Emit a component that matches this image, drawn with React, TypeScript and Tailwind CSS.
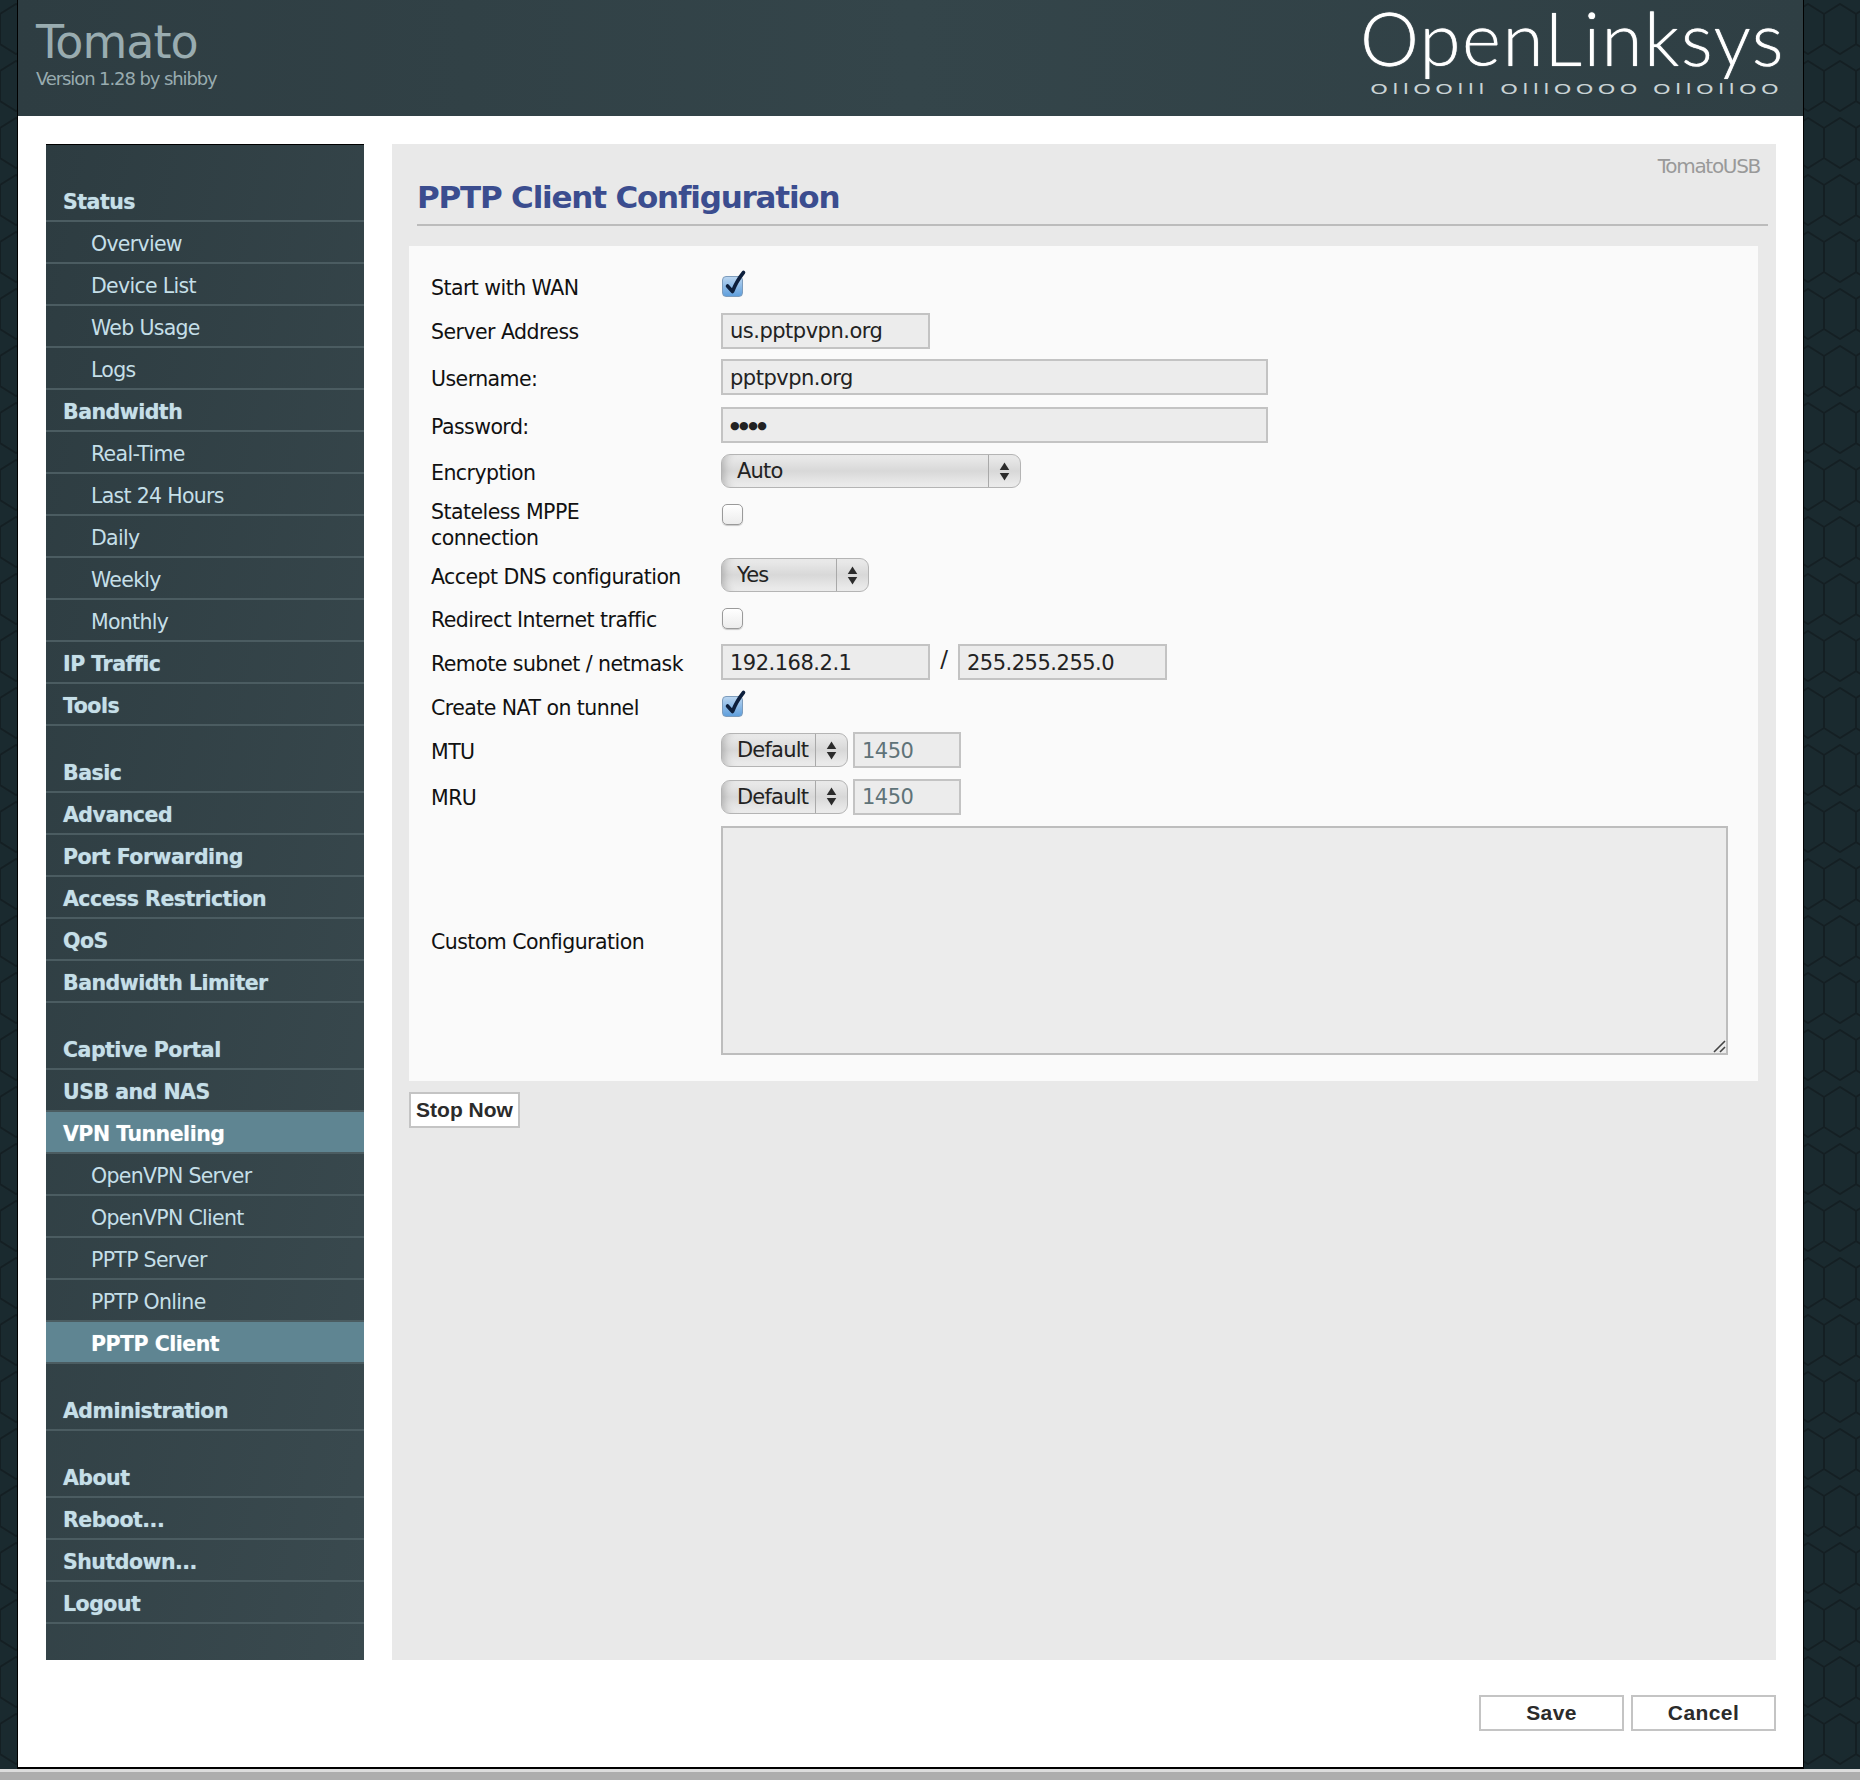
import type { ReactNode } from "react";

const ui = "font-['DejaVu_Sans',sans-serif]";

type NavItem = { label: string; sub?: boolean; active?: boolean };

const navGroups: NavItem[][] = [
  [
    { label: "Status" },
    { label: "Overview", sub: true },
    { label: "Device List", sub: true },
    { label: "Web Usage", sub: true },
    { label: "Logs", sub: true },
    { label: "Bandwidth" },
    { label: "Real-Time", sub: true },
    { label: "Last 24 Hours", sub: true },
    { label: "Daily", sub: true },
    { label: "Weekly", sub: true },
    { label: "Monthly", sub: true },
    { label: "IP Traffic" },
    { label: "Tools" },
  ],
  [
    { label: "Basic" },
    { label: "Advanced" },
    { label: "Port Forwarding" },
    { label: "Access Restriction" },
    { label: "QoS" },
    { label: "Bandwidth Limiter" },
  ],
  [
    { label: "Captive Portal" },
    { label: "USB and NAS" },
    { label: "VPN Tunneling", active: true },
    { label: "OpenVPN Server", sub: true },
    { label: "OpenVPN Client", sub: true },
    { label: "PPTP Server", sub: true },
    { label: "PPTP Online", sub: true },
    { label: "PPTP Client", sub: true, active: true },
  ],
  [{ label: "Administration" }],
  [{ label: "About" }, { label: "Reboot..." }, { label: "Shutdown..." }, { label: "Logout" }],
];

function NavRow({ item }: { item: NavItem }) {
  const weight =
    item.sub && !item.active
      ? "font-normal tracking-[-0.7px] text-[20.5px]"
      : "font-bold tracking-[-0.5px] text-[20.5px] [text-shadow:0_0_1px_rgba(197,223,232,0.6)]";
  const color = item.active ? "bg-[#5f8592] text-white" : "text-[#c5dfe8]";
  const indent = item.sub ? "pl-[45px]" : "pl-[17px]";
  return (
    <div className={`flex h-[42px] items-center border-b-2 border-[#4b5c61] pt-[5px] ${weight} ${color} ${indent} ${ui}`}>
      {item.label}
    </div>
  );
}

function Sidebar() {
  return (
    <nav className="flex h-[1516px] w-[318px] shrink-0 flex-col gap-[25px] border-t border-black bg-gradient-to-br from-[#2d3c41] to-[#3a4a4f] pt-[35px]">
      {navGroups.map((group) => (
        <div key={group[0].label}>
          {group.map((item) => (
            <NavRow key={item.label} item={item} />
          ))}
        </div>
      ))}
    </nav>
  );
}

function Row({ label, h, children }: { label?: ReactNode; h: string; children?: ReactNode }) {
  return (
    <div className={`flex items-center ${h}`}>
      <div className="w-[290px] shrink-0 pt-[3px] text-[20.5px] leading-[26px] tracking-[-0.55px] text-[#111]">{label}</div>
      <div className="flex flex-1 items-center">{children}</div>
    </div>
  );
}

function Field({ value, w, muted, size }: { value: string; w: string; muted?: boolean; size?: string }) {
  return (
    <div
      className={`flex h-[36px] items-center border-2 border-[#c3c3c3] bg-[#ececec] pl-[7px] pt-[3px] tracking-[-0.5px] ${size ?? "text-[21px]"} ${w} ${
        muted ? "text-[#5f7378]" : "text-[#222]"
      }`}
    >
      {value}
    </div>
  );
}

function Check({ on }: { on?: boolean }) {
  return (
    <span className="relative ml-px block h-[21px] w-[21px]">
      {on ? (
        <>
          <span className="absolute inset-0 rounded-[4px] border border-[#7d9cbc] bg-gradient-to-b from-[#b9d5f0] to-[#5f9fdc]" />
          <svg viewBox="0 0 21 21" className="absolute inset-0 h-[21px] w-[21px] overflow-visible" fill="none">
            <path d="M5.5 10 L10.5 15.5 C13 9 17 2 21.5 -3.5" stroke="#0d1f3c" strokeWidth="3.6" strokeLinecap="round" strokeLinejoin="round" />
          </svg>
        </>
      ) : (
        <span className="absolute inset-0 rounded-[5px] border border-[#9a9a9a] bg-gradient-to-b from-[#ffffff] to-[#ececec] shadow-[0_1px_1px_rgba(0,0,0,0.2)]" />
      )}
    </span>
  );
}

function Select({ value, w }: { value: string; w: string }) {
  return (
    <div
      className={`flex h-[34px] items-stretch rounded-[9px] border border-[#b4b4b4] bg-gradient-to-b from-[#ececec] via-[#d8d8d8] to-[#eeeeee] shadow-[inset_8px_0_8px_-6px_rgba(0,0,0,0.22)] ${w}`}
    >
      <span className="flex flex-1 items-center pl-[15px] pt-[2px] text-[21px] tracking-[-0.8px] text-[#222]">{value}</span>
      <span className="flex w-[32px] shrink-0 items-center justify-center border-l border-[#a9a9a9]">
        <svg viewBox="0 0 10 18" className="h-[19px] w-[11px]" fill="#2b2b2b">
          <path d="M5 0.5 L9.5 7.5 L0.5 7.5 Z" />
          <path d="M5 17.5 L9.5 10.5 L0.5 10.5 Z" />
        </svg>
      </span>
    </div>
  );
}

function Button({ label, className }: { label: string; className: string }) {
  return (
    <button
      className={`flex items-center justify-center border-2 border-[#c4c4c4] bg-white font-['Liberation_Sans',sans-serif] text-[21px] font-bold text-[#2b2b2b] ${className}`}
    >
      {label}
    </button>
  );
}

function ConfigForm() {
  return (
    <div className="ml-[17px] mt-[20px] h-[835px] w-[1349px] bg-[#fafafa] pl-[22px] pr-[30px] pt-[18px]">
      <Row label="Start with WAN" h="h-[44px]">
        <Check on />
      </Row>
      <Row label="Server Address" h="h-[45px]">
        <Field value="us.pptpvpn.org" w="w-[209px]" />
      </Row>
      <Row label="Username:" h="h-[48px]">
        <Field value="pptpvpn.org" w="w-[547px]" />
      </Row>
      <Row label="Password:" h="h-[48px]">
        <Field value="●●●●" w="w-[547px]" size="text-[11px]" />
      </Row>
      <Row label="Encryption" h="h-[44px]">
        <Select value="Auto" w="w-[300px]" />
      </Row>
      <Row label={<>Stateless MPPE<br />connection</>} h="h-[60px]">
        <div className="-mt-[18px]">
          <Check />
        </div>
      </Row>
      <Row label="Accept DNS configuration" h="h-[44px]">
        <Select value="Yes" w="w-[148px]" />
      </Row>
      <Row label="Redirect Internet traffic" h="h-[43px]">
        <Check />
      </Row>
      <Row label="Remote subnet / netmask" h="h-[44px]">
        <Field value="192.168.2.1" w="w-[209px]" />
        <span className="-mt-[6px] w-[28px] text-center text-[23px] text-[#222]">/</span>
        <Field value="255.255.255.0" w="w-[209px]" />
      </Row>
      <Row label="Create NAT on tunnel" h="h-[44px]">
        <Check on />
      </Row>
      <Row label="MTU" h="h-[44px]">
        <Select value="Default" w="w-[127px]" />
        <div className="ml-[5px]">
          <Field value="1450" w="w-[108px]" muted />
        </div>
      </Row>
      <Row label="MRU" h="h-[49px]">
        <Select value="Default" w="w-[127px]" />
        <div className="ml-[5px]">
          <Field value="1450" w="w-[108px]" muted />
        </div>
      </Row>
      <Row label="Custom Configuration" h="h-[239px]">
        <div className="relative h-[229px] w-[1007px] border-2 border-[#bdbdbd] bg-[#ececec]">
          <svg viewBox="0 0 14 14" className="absolute bottom-0 right-0 h-[14px] w-[14px]" stroke="#444" strokeWidth="1.6">
            <path d="M2 13 L13 2 M8 13 L13 8" />
          </svg>
        </div>
      </Row>
    </div>
  );
}

function MainPanel() {
  return (
    <main className="flex h-[1516px] w-[1384px] flex-col bg-[#e9e9e9]">
      <div className="flex justify-end pr-[16px] pt-[8px] text-[20px] leading-[28px] tracking-[-1.3px] text-[#999]">TomatoUSB</div>
      <h1 className="ml-[25px] mr-[8px] mt-[-4px] border-b-2 border-[#bcbcbc] pb-[5px] text-[31px] font-bold leading-[43px] tracking-[-1.2px] text-[#3b4d8f]">
        PPTP Client Configuration
      </h1>
      <ConfigForm />
      <Button label="Stop Now" className="ml-[17px] mt-[11px] h-[36px] w-[111px]" />
    </main>
  );
}

function Header() {
  return (
    <header className="flex h-[116px] items-start justify-between bg-gradient-to-r from-[#2e3d42] via-[#34454a] to-[#2f3f44] pl-[18px] pr-[18px]">
      <div className="pt-[15px] text-[#99acb0]">
        <div className="text-[46px] leading-[54px] tracking-[-1px]">Tomato</div>
        <div className="mt-[-2px] text-[18px] leading-[24px] tracking-[-1.1px]">Version 1.28 by shibby</div>
      </div>
      <div className="flex w-[430px] flex-col items-end font-['Lato',sans-serif] text-white">
        <div className="whitespace-nowrap text-[74.5px] font-light leading-[74px] tracking-[1.5px] [text-shadow:0_0_1px_#ffffff]">OpenLinksys</div>
        <div className="mr-[2px] mt-[8px] origin-right scale-x-[1.6] whitespace-pre font-['DejaVu_Sans',sans-serif] text-[14px] leading-[14px] tracking-[2.7px] text-[#c9d3d5]">
          OllOOlll OlllOOOO OllOllOO
        </div>
      </div>
    </header>
  );
}

export default function App() {
  return (
    <div className={`relative h-[1780px] w-[1860px] overflow-hidden bg-[#1a2a2f] ${ui}`}>
      <svg className="absolute inset-0 h-full w-full" aria-hidden="true">
        <defs>
          <pattern id="weave" width="64" height="57" patternUnits="userSpaceOnUse">
            <path
              d="M0 14 L16 4 L32 14 L32 44 L48 54 L64 44 M32 44 L16 54 L0 44 M0 14 L0 44 M64 14 L64 44 M32 14 L48 4 L64 14"
              fill="none"
              stroke="#141f23"
              strokeWidth="2"
            />
          </pattern>
        </defs>
        <rect width="100%" height="100%" fill="url(#weave)" />
      </svg>
      <div className="relative ml-[17px] h-[1769px] w-[1787px] border-b-2 border-l border-r border-black bg-white">
        <Header />
        <div className="flex gap-[28px] pl-[28px] pt-[28px]">
          <Sidebar />
          <MainPanel />
        </div>
        <div className="flex justify-end gap-[7px] pr-[27px] pt-[35px]">
          <Button label="Save" className="h-[36px] w-[145px] tracking-[0.4px]" />
          <Button label="Cancel" className="h-[36px] w-[145px] tracking-[0.4px]" />
        </div>
      </div>
      <div className="relative h-[11px] border-t-[3px] border-[#dcdcdc] bg-[#adadad]" />
    </div>
  );
}
